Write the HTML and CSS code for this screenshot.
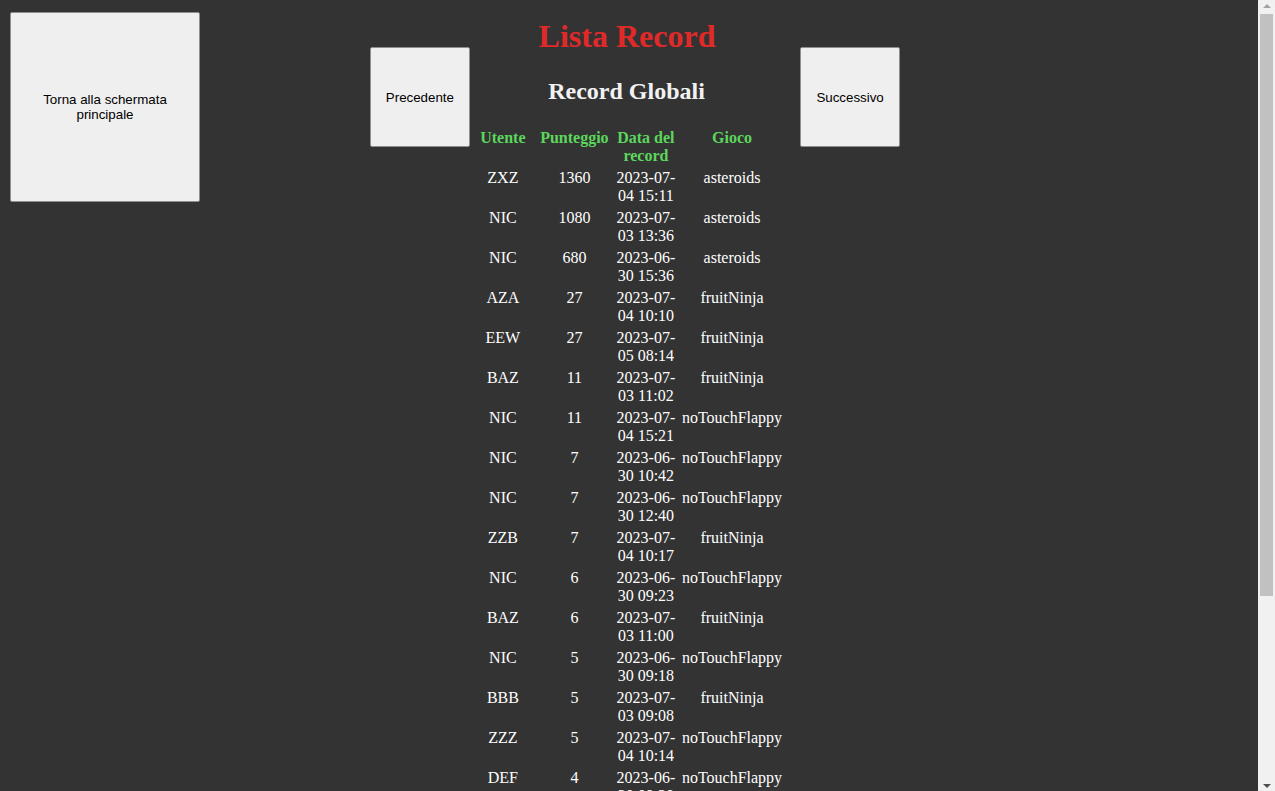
FILE: index.html
```html
<!DOCTYPE html>
<html lang="it">
<head>
<meta charset="utf-8">
<title>Lista Record</title>
<link rel="stylesheet" href="styles.css">
</head>
<body>
<div class="page">
  <div class="side">
    <button class="home">Torna alla schermata principale</button>
  </div>
  <main class="center">
    <h1 class="title">Lista Record</h1>
    <div class="nav-row">
      <button class="nav">Precedente</button>
      <section class="board">
        <h2 class="subtitle">Record Globali</h2>
        <table class="records">
          <thead>
            <tr>
              <th class="c-user">Utente</th>
              <th class="c-score">Punteggio</th>
              <th class="c-date">Data del record</th>
              <th class="c-game">Gioco</th>
            </tr>
          </thead>
          <tbody>
            <tr><td>ZXZ</td><td>1360</td><td>2023-07-04 15:11</td><td>asteroids</td></tr>
            <tr><td>NIC</td><td>1080</td><td>2023-07-03 13:36</td><td>asteroids</td></tr>
            <tr><td>NIC</td><td>680</td><td>2023-06-30 15:36</td><td>asteroids</td></tr>
            <tr><td>AZA</td><td>27</td><td>2023-07-04 10:10</td><td>fruitNinja</td></tr>
            <tr><td>EEW</td><td>27</td><td>2023-07-05 08:14</td><td>fruitNinja</td></tr>
            <tr><td>BAZ</td><td>11</td><td>2023-07-03 11:02</td><td>fruitNinja</td></tr>
            <tr><td>NIC</td><td>11</td><td>2023-07-04 15:21</td><td>noTouchFlappy</td></tr>
            <tr><td>NIC</td><td>7</td><td>2023-06-30 10:42</td><td>noTouchFlappy</td></tr>
            <tr><td>NIC</td><td>7</td><td>2023-06-30 12:40</td><td>noTouchFlappy</td></tr>
            <tr><td>ZZB</td><td>7</td><td>2023-07-04 10:17</td><td>fruitNinja</td></tr>
            <tr><td>NIC</td><td>6</td><td>2023-06-30 09:23</td><td>noTouchFlappy</td></tr>
            <tr><td>BAZ</td><td>6</td><td>2023-07-03 11:00</td><td>fruitNinja</td></tr>
            <tr><td>NIC</td><td>5</td><td>2023-06-30 09:18</td><td>noTouchFlappy</td></tr>
            <tr><td>BBB</td><td>5</td><td>2023-07-03 09:08</td><td>fruitNinja</td></tr>
            <tr><td>ZZZ</td><td>5</td><td>2023-07-04 10:14</td><td>noTouchFlappy</td></tr>
            <tr><td>DEF</td><td>4</td><td>2023-06-30 09:20</td><td>noTouchFlappy</td></tr>
            <tr><td>NIC</td><td>4</td><td>2023-06-30 09:12</td><td>noTouchFlappy</td></tr>
            <tr><td>AAA</td><td>4</td><td>2023-07-03 09:01</td><td>fruitNinja</td></tr>
            <tr><td>BAZ</td><td>3</td><td>2023-07-03 10:55</td><td>fruitNinja</td></tr>
            <tr><td>NIC</td><td>2</td><td>2023-06-30 09:05</td><td>noTouchFlappy</td></tr>
            <tr><td>ZXZ</td><td>1</td><td>2023-07-04 15:02</td><td>fruitNinja</td></tr>
          </tbody>
        </table>
      </section>
      <button class="nav">Successivo</button>
    </div>
  </main>
  <div class="side"></div>
</div>
<div class="fake-scrollbar" aria-hidden="true">
  <span class="sb-arrow sb-up"></span>
  <span class="sb-thumb"></span>
  <span class="sb-arrow sb-down"></span>
</div>
</body>
</html>
```

FILE: styles.css
```css
html, body {
  margin: 0;
  padding: 0;
}

body {
  background: #333333;
  color: #ffffff;
  font-family: "Liberation Serif", "Times New Roman", serif;
  font-size: 16px;
}

.page {
  display: grid;
  grid-template-columns: 210px 1fr 210px;
  align-items: start;
  padding-right: 17px;
  padding-bottom: 20px;
}

button {
  font-family: "Liberation Sans", Arial, sans-serif;
  font-size: 13.333px;
  color: #000000;
  background: #efefef;
  border: 1px solid #8f8f8f;
  border-radius: 2px;
  padding: 1px 6px;
  line-height: 15px;
  cursor: pointer;
}

.home {
  width: 190px;
  height: 190px;
  margin: 12px 0 0 10px;
}

.center {
  display: flex;
  flex-direction: column;
}

.title {
  margin: 0;
  padding: 24px 4px 0 0;
  font-size: 32px;
  line-height: 24px;
  font-weight: bold;
  text-align: center;
  color: #e02a2a;
}

.nav-row {
  display: flex;
  justify-content: center;
  align-items: flex-start;
  margin-top: -1px;
  padding-left: 12px;
}

.nav {
  flex: none;
  width: 100px;
  height: 100px;
}

.board {
  flex: none;
  margin: 0 15px 0 -2px;
}

.subtitle {
  margin: 30px 0 21px;
  font-size: 24px;
  line-height: 28px;
  font-weight: bold;
  text-align: center;
  color: #f2f2f2;
}

.records {
  border-spacing: 2px;
  line-height: 18px;
}

.records th,
.records td {
  padding: 1px;
  text-align: center;
  vertical-align: top;
}

.records th {
  color: #5cd65c;
  font-weight: bold;
}

.records td {
  color: #ffffff;
}

.c-user { width: 64px; }
.c-score { width: 71px; }
.c-date { width: 64px; }
.c-game { width: 100px; }

/* Browser scrollbar as shown in the screenshot */
.fake-scrollbar {
  position: fixed;
  top: 0;
  right: 0;
  width: 17px;
  height: 100vh;
  background: #f1f1f1;
  display: flex;
  flex-direction: column;
  align-items: center;
}

.sb-arrow {
  flex: none;
  width: 0;
  height: 0;
  border-left: 4px solid transparent;
  border-right: 4px solid transparent;
}

.sb-up {
  margin-top: 4px;
  border-bottom: 4px solid #a3a3a3;
}

.sb-thumb {
  flex: none;
  width: 13px;
  height: 582px;
  margin-top: 6px;
  background: #c1c1c1;
}

.sb-down {
  margin-top: auto;
  margin-bottom: 3px;
  border-top: 4px solid #505050;
}
```
